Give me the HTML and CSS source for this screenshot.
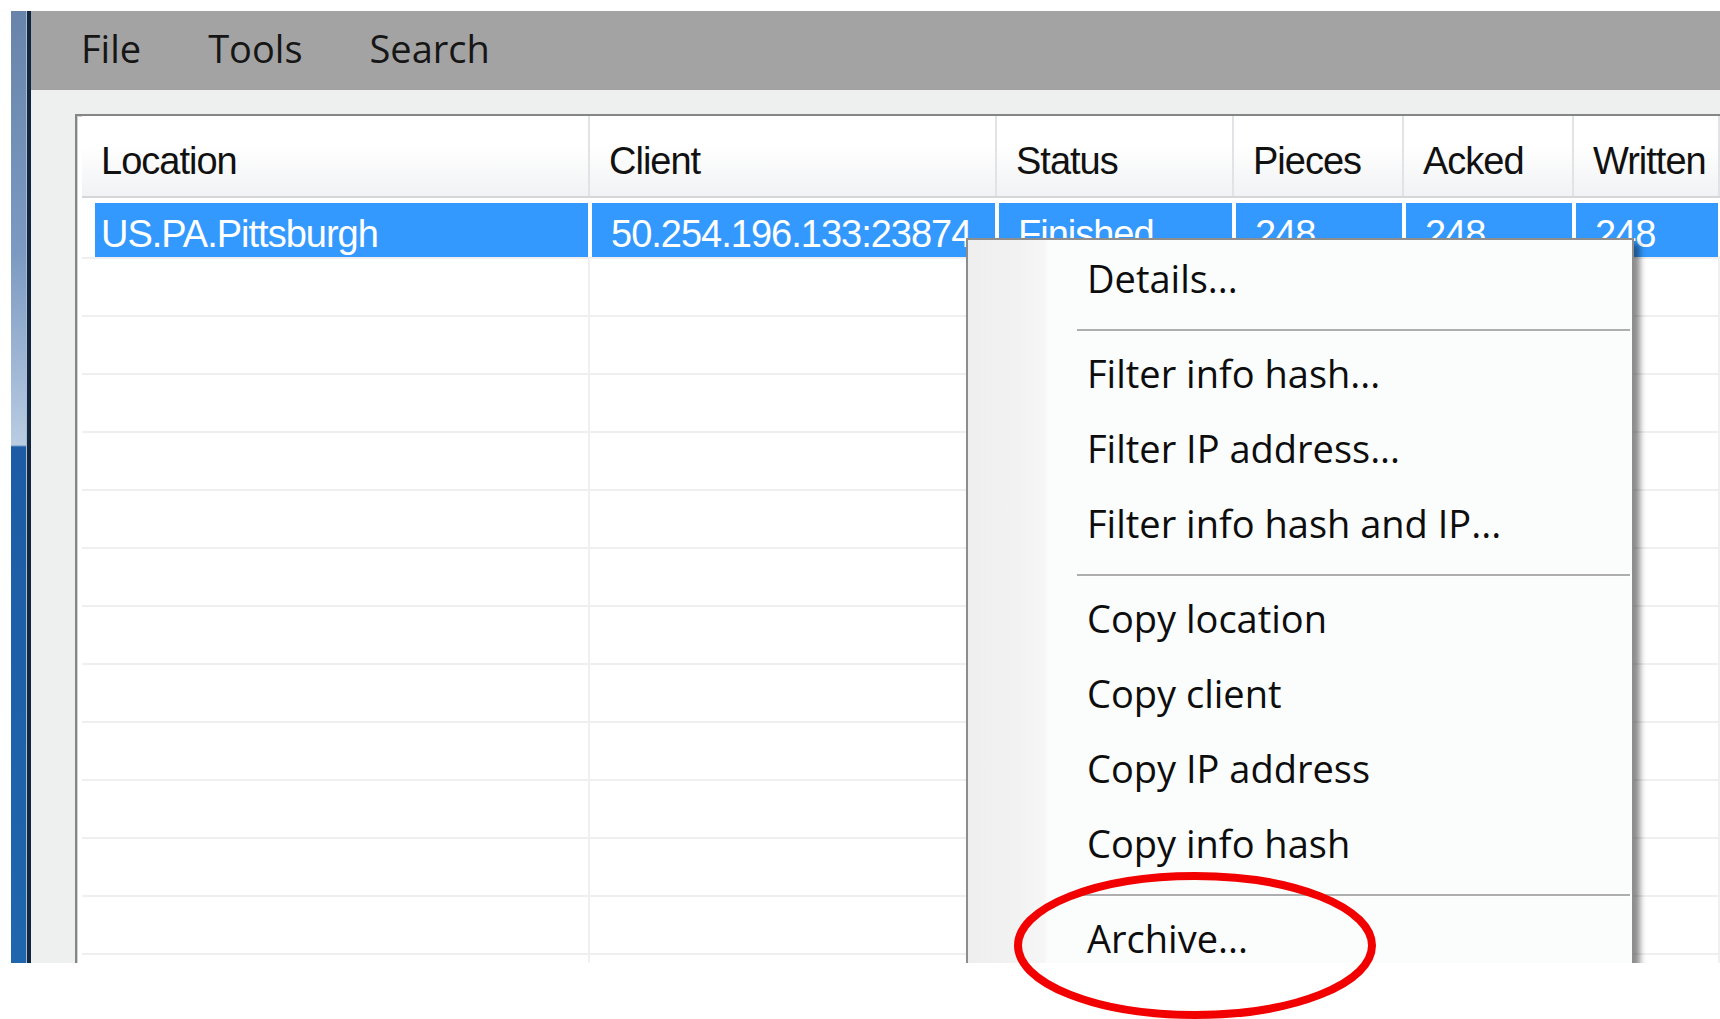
FILE: index.html
```html
<!DOCTYPE html>
<html lang="en">
<head>
<meta charset="utf-8">
<title>Peers</title>
<link rel="stylesheet" href="styles.css">
</head>
<body>
<div class="screen">
  <div class="frame-edge"></div>
  <div class="window">
    <nav class="menubar">
      <span class="menubar-item">File</span>
      <span class="menubar-item">Tools</span>
      <span class="menubar-item">Search</span>
    </nav>
    <div class="client">
      <div class="list">
        <div class="list-head">
          <div class="hcell">Location</div>
          <div class="hcell">Client</div>
          <div class="hcell">Status</div>
          <div class="hcell">Pieces</div>
          <div class="hcell">Acked</div>
          <div class="hcell">Written</div>
        </div>
        <div class="list-body">
          <div class="row selected">
            <div class="cell">US.PA.Pittsburgh</div>
            <div class="cell">50.254.196.133:23874</div>
            <div class="cell">Finished</div>
            <div class="cell">248</div>
            <div class="cell">248</div>
            <div class="cell">248</div>
          </div>
          <div class="row"><div class="cell"></div><div class="cell"></div><div class="cell"></div><div class="cell"></div><div class="cell"></div><div class="cell"></div></div>
          <div class="row"><div class="cell"></div><div class="cell"></div><div class="cell"></div><div class="cell"></div><div class="cell"></div><div class="cell"></div></div>
          <div class="row"><div class="cell"></div><div class="cell"></div><div class="cell"></div><div class="cell"></div><div class="cell"></div><div class="cell"></div></div>
          <div class="row"><div class="cell"></div><div class="cell"></div><div class="cell"></div><div class="cell"></div><div class="cell"></div><div class="cell"></div></div>
          <div class="row"><div class="cell"></div><div class="cell"></div><div class="cell"></div><div class="cell"></div><div class="cell"></div><div class="cell"></div></div>
          <div class="row"><div class="cell"></div><div class="cell"></div><div class="cell"></div><div class="cell"></div><div class="cell"></div><div class="cell"></div></div>
          <div class="row"><div class="cell"></div><div class="cell"></div><div class="cell"></div><div class="cell"></div><div class="cell"></div><div class="cell"></div></div>
          <div class="row"><div class="cell"></div><div class="cell"></div><div class="cell"></div><div class="cell"></div><div class="cell"></div><div class="cell"></div></div>
          <div class="row"><div class="cell"></div><div class="cell"></div><div class="cell"></div><div class="cell"></div><div class="cell"></div><div class="cell"></div></div>
          <div class="row"><div class="cell"></div><div class="cell"></div><div class="cell"></div><div class="cell"></div><div class="cell"></div><div class="cell"></div></div>
          <div class="row"><div class="cell"></div><div class="cell"></div><div class="cell"></div><div class="cell"></div><div class="cell"></div><div class="cell"></div></div>
          <div class="row"><div class="cell"></div><div class="cell"></div><div class="cell"></div><div class="cell"></div><div class="cell"></div><div class="cell"></div></div>
          <div class="row"><div class="cell"></div><div class="cell"></div><div class="cell"></div><div class="cell"></div><div class="cell"></div><div class="cell"></div></div>
        </div>
      </div>
    </div>
  </div>

  <ul class="context-menu">
    <li class="menu-item">Details...</li>
    <li class="menu-sep"></li>
    <li class="menu-item">Filter info hash...</li>
    <li class="menu-item">Filter IP address...</li>
    <li class="menu-item">Filter info hash and IP...</li>
    <li class="menu-sep"></li>
    <li class="menu-item">Copy location</li>
    <li class="menu-item">Copy client</li>
    <li class="menu-item">Copy IP address</li>
    <li class="menu-item">Copy info hash</li>
    <li class="menu-sep"></li>
    <li class="menu-item">Archive...</li>
  </ul>
</div>

<svg class="highlight-ring" width="362" height="147" viewBox="0 0 362 147" aria-hidden="true">
  <ellipse cx="181" cy="73.5" rx="177" ry="69.5" fill="none" stroke="#f20000" stroke-width="8"/>
</svg>
</body>
</html>
```

FILE: styles.css
```css
html, body {
  margin: 0;
  padding: 0;
  height: 100%;
  overflow: hidden;
  background: #ffffff;
}

body {
  position: relative;
  font-family: "Liberation Sans", Arial, sans-serif;
}

/* captured desktop area */
.screen {
  position: relative;
  margin: 11px 0 0 11px;
  height: 952px;
  display: flex;
  overflow: hidden;
}

/* left window border */
.frame-edge {
  flex: 0 0 15px;
  background: linear-gradient(to bottom, #6884ab 0, #7b99c1 240px, #b9cce2 434px, #1d5ca4 436px, #1f66ac 100%);
  border-right: 1px solid #a9bdd3;
  box-shadow: 4px 0 0 #12263f;
  margin-right: 4px;
}

.window {
  flex: 1;
  display: flex;
  flex-direction: column;
  min-width: 0;
}

/* menu bar */
.menubar {
  flex: 0 0 79px;
  box-sizing: border-box;
  padding: 0 0 4px 50px;
  display: flex;
  gap: 67px;
  background: #a3a3a3;
  font-family: "Open Sans", "Noto Sans", sans-serif;
  font-size: 38px;
  line-height: 75px;
  color: #161616;
}

.client {
  flex: 1;
  display: flex;
  background: #eef0ef;
  padding: 24px 0 0 44px;
  min-height: 0;
}

/* list view */
.list {
  flex: 1;
  background: #ffffff;
  border-top: 2px solid #858585;
  border-left: 2px solid #858585;
  box-shadow: inset 1px 1px 0 #cfd1d3;
  padding-left: 5px;
  font-size: 38px;
  letter-spacing: -1px;
  min-width: 0;
}

.list-head,
.row {
  display: grid;
  grid-template-columns: 508px 407px 237px 170px 170px 1fr;
}

.list-head {
  height: 80px;
  border-bottom: 2px solid #d5d6d8;
  background: linear-gradient(to bottom, #ffffff 0, #ffffff 38%, #f1f2f4 100%);
  margin-bottom: 3px;
}

.hcell {
  box-sizing: border-box;
  padding: 10px 0 0 19px;
  line-height: 70px;
  color: #111111;
  border-right: 2px solid #e1e3e7;
  white-space: nowrap;
}

.row {
  height: 58px;
  box-sizing: border-box;
  border-bottom: 2px solid #efefef;
}

.cell {
  box-sizing: border-box;
  padding: 11px 0 0 19px;
  line-height: 44px;
  border-right: 2px solid #f0f0f0;
  white-space: nowrap;
  overflow: hidden;
}

.row.selected .cell {
  background: #3399ff;
  color: #ffffff;
  border-right-color: #ffffff;
  box-shadow: inset 2px 2px 0 #ffffff;
  padding-left: 21px;
}

.row.selected .cell:first-child {
  box-shadow: inset 13px 2px 0 #ffffff;
  padding-left: 19px;
}

/* popup menu */
.context-menu {
  position: absolute;
  left: 955px;
  top: 227px;
  width: 668px;
  box-sizing: border-box;
  margin: 0;
  padding: 1px 0 0;
  list-style: none;
  border: 2px solid #8d8d8d;
  background: linear-gradient(to right, #eeeeee 0, #f2f2f2 50px, #f6f6f6 76px, #fbfcfc 80px, #fbfcfc 100%);
  box-shadow: 6px 6px 6px rgba(0, 0, 0, 0.45);
  font-family: "Open Sans", "Noto Sans", sans-serif;
  font-size: 38px;
  color: #0d0d0d;
}

.menu-item {
  height: 75px;
  line-height: 75px;
  padding-left: 119px;
  white-space: nowrap;
}

.menu-sep {
  height: 2px;
  margin: 13px 2px 5px 109px;
  background: #aeaeae;
  box-shadow: 0 1px 0 #ffffff;
}

/* annotation ring over the menu */
.highlight-ring {
  position: absolute;
  left: 1014px;
  top: 872px;
  display: block;
}
```
